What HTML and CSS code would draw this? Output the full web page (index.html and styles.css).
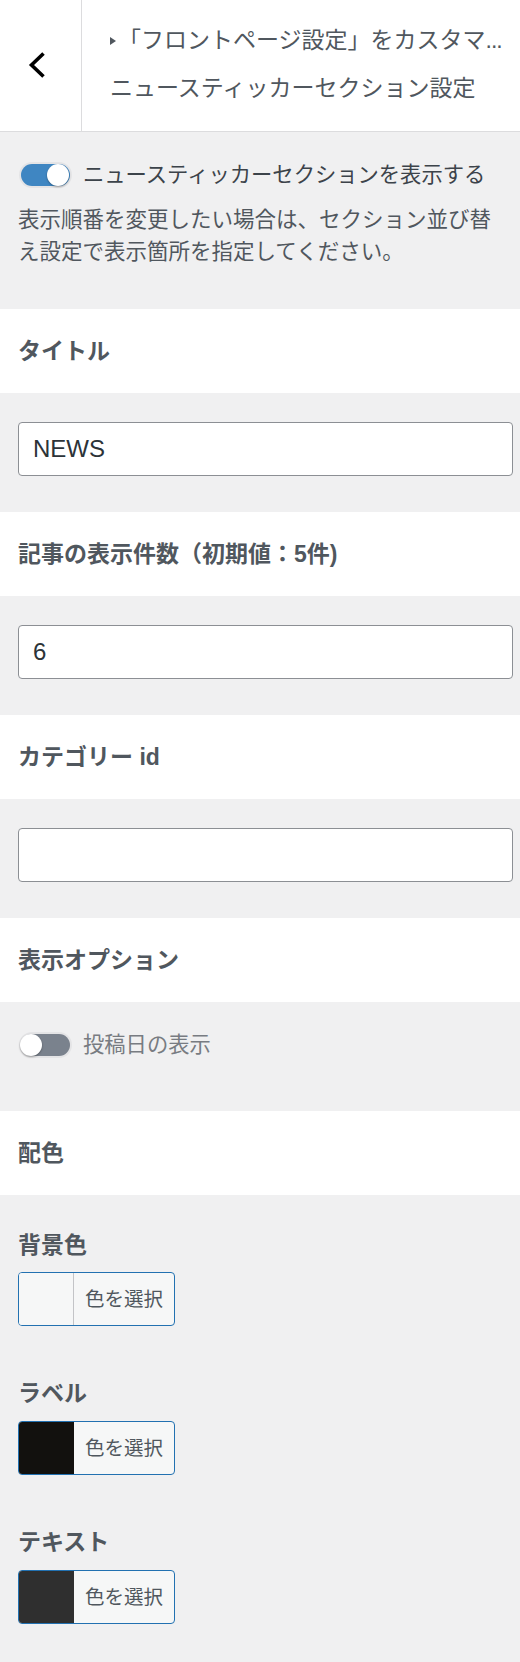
FILE: index.html
```html
<!DOCTYPE html>
<html lang="ja">
<head>
<meta charset="utf-8">
<title>ニュースティッカーセクション設定</title>
<link rel="stylesheet" href="styles.css">
</head>
<body>
<header class="head">
  <div class="back">
    <svg class="chev" width="24" height="30" viewBox="0 0 24 30"><path d="M16.5 3.5 L4.5 15 L16.5 26.5" fill="none" stroke="#000" stroke-width="3.6"/></svg>
  </div>
  <div class="titles">
    <div class="crumb"><span class="tri"></span>「フロントページ設定」をカスタマ<span class="ell">...</span></div>
    <div class="title">ニュースティッカーセクション設定</div>
  </div>
</header>

<section class="gray intro">
  <div class="toggle-row">
    <span class="toggle on"><span class="knob"></span></span>
    <span class="tlabel">ニュースティッカーセクションを表示する</span>
  </div>
  <p class="desc">表示順番を変更したい場合は、セクション並び替え設定で表示箇所を指定してください。</p>
</section>

<section class="white"><h2 class="heading">タイトル</h2></section>
<section class="gray field"><div class="input">NEWS</div></section>

<section class="white"><h2 class="heading">記事の表示件数（初期値：5件)</h2></section>
<section class="gray field"><div class="input">6</div></section>

<section class="white"><h2 class="heading">カテゴリー id</h2></section>
<section class="gray field"><div class="input"></div></section>

<section class="white"><h2 class="heading">表示オプション</h2></section>
<section class="gray opts">
  <div class="toggle-row">
    <span class="toggle off"><span class="knob"></span></span>
    <span class="tlabel dim">投稿日の表示</span>
  </div>
</section>

<section class="white"><h2 class="heading">配色</h2></section>
<section class="gray colors">
  <div class="cgroup">
    <h3 class="heading clabel">背景色</h3>
    <div class="cbtn"><span class="swatch light"></span><span class="ctext">色を選択</span></div>
  </div>
  <div class="cgroup">
    <h3 class="heading clabel">ラベル</h3>
    <div class="cbtn"><span class="swatch black"></span><span class="ctext">色を選択</span></div>
  </div>
  <div class="cgroup">
    <h3 class="heading clabel">テキスト</h3>
    <div class="cbtn"><span class="swatch dark"></span><span class="ctext">色を選択</span></div>
  </div>
</section>
</body>
</html>
```

FILE: styles.css
```css
* { box-sizing: border-box; }
html, body {
  margin: 0;
  padding: 0;
  background: #f0f0f1;
  font-family: "Liberation Sans", "Noto Sans CJK JP", sans-serif;
  color: #50575e;
}

.head {
  display: flex;
  height: 132px;
  background: #fff;
  border-bottom: 1px solid #dcdcde;
}
.back {
  width: 82px;
  flex: 0 0 82px;
  border-right: 1px solid #dcdcde;
  display: flex;
  align-items: center;
  justify-content: center;
  padding-right: 4px;
  padding-bottom: 2px;
}
.chev { display: block; }
.titles {
  flex: 1;
  min-width: 0;
  padding: 24px 0 0 28px;
}
.crumb {
  font-size: 23px;
  line-height: 32px;
  white-space: nowrap;
  color: #50575e;
}
.ell { letter-spacing: -1px; }
.tri {
  display: inline-block;
  width: 0;
  height: 0;
  border-top: 4px solid transparent;
  border-bottom: 4px solid transparent;
  border-left: 6px solid #50575e;
  margin-right: 2px;
  vertical-align: 3px;
}
.title {
  margin-top: 16px;
  font-size: 23px;
  line-height: 32px;
  white-space: nowrap;
  color: #50575e;
}

.gray { background: #f0f0f1; }
.white {
  background: #fff;
  height: 84px;
  display: flex;
  align-items: center;
  padding: 0 18px;
}
.heading {
  margin: 0;
  font-size: 23px;
  font-weight: bold;
  line-height: 32px;
  color: #50575e;
}

.intro { padding: 28px 18px 41px 18px; height: 177px; }
.toggle-row {
  display: flex;
  align-items: center;
  height: 30px;
  gap: 13px;
}
.toggle {
  position: relative;
  width: 49px;
  height: 22px;
  border-radius: 11px;
  flex: 0 0 49px;
  box-shadow: 0 0 0 2px #e4e4e6;
}
.toggle.on { background: #3f86c2; }
.toggle.off { background: #7a828d; }
.knob {
  position: absolute;
  top: 0;
  width: 22px;
  height: 22px;
  border-radius: 50%;
  background: #fff;
  box-shadow: 0 1px 2px rgba(0,0,0,0.35);
}
.toggle.on .knob { right: 1px; }
.toggle.off .knob { left: -1px; }
.intro .toggle-row { padding-left: 3px; }
.opts .toggle-row { padding-left: 21px; }
.tlabel {
  font-size: 21.3px;
  line-height: 30px;
  color: #3c434a;
  white-space: nowrap;
}
.tlabel.dim { color: #787c82; }
.desc {
  margin: 14px 0 0 0;
  font-size: 21.5px;
  line-height: 32px;
  color: #50575e;
}

.field { padding: 29px 7px 36px 18px; height: 119px; }
.input {
  height: 54px;
  background: #fff;
  border: 1px solid #8c8f94;
  border-radius: 4px;
  padding: 0 14px;
  font-size: 24px;
  line-height: 52px;
  color: #2c3338;
}

.opts { padding: 28px 0 51px 0; height: 109px; }

.colors { padding: 34px 18px 38px 18px; }
.cgroup + .cgroup { margin-top: 51px; }
.clabel { line-height: 32px; }
.cbtn {
  margin-top: 11px;
  display: flex;
  width: 157px;
  height: 54px;
  border: 1px solid #2271b1;
  border-radius: 4px;
  overflow: hidden;
  background: #f6f7f7;
}
.cgroup + .cgroup .cbtn { margin-top: 12px; }
.swatch {
  width: 55px;
  flex: 0 0 55px;
  height: 100%;
}
.swatch.light { background: #f6f7f7; border-right: 1px solid #c3c4c7; }
.swatch.black { background: #12110e; }
.swatch.dark { background: #2f2f2f; }
.ctext {
  padding-left: 11px;
  font-size: 19.5px;
  line-height: 52px;
  color: #50575e;
  white-space: nowrap;
}
```
